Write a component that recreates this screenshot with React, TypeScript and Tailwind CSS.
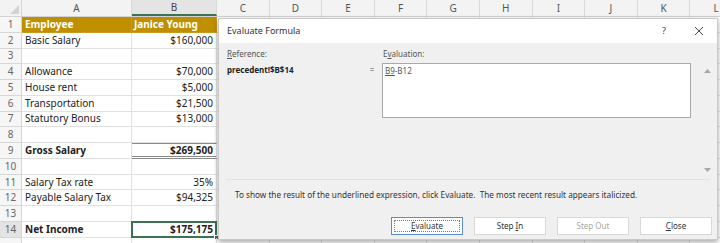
import React from 'react';

type R = { n: number; a?: string; b?: string; header?: boolean; bold?: boolean; gross?: boolean; sel?: boolean; hideNum?: boolean };

const rows: R[] = [
  { n: 1, a: 'Employee', b: 'Janice Young', header: true },
  { n: 2, a: 'Basic Salary', b: '$160,000' },
  { n: 3 },
  { n: 4, a: 'Allowance', b: '$70,000' },
  { n: 5, a: 'House rent', b: '$5,000' },
  { n: 6, a: 'Transportation', b: '$21,500' },
  { n: 7, a: 'Statutory Bonus', b: '$13,000' },
  { n: 8 },
  { n: 9, a: 'Gross Salary', b: '$269,500', bold: true, gross: true },
  { n: 10 },
  { n: 11, a: 'Salary Tax rate', b: '35%' },
  { n: 12, a: 'Payable Salary Tax', b: '$94,325' },
  { n: 13 },
  { n: 14, a: 'Net Income', b: '$175,175', bold: true, sel: true },
  { n: 15, hideNum: true },
];

const cols = ['C', 'D', 'E', 'F', 'G', 'H', 'I', 'J', 'K', 'L'];

function Row({ r }: { r: R }) {
  return (
    <div className="flex h-[15.77px] shrink-0">
      <div
        className={`w-[22px] shrink-0 flex items-center justify-center border-r border-b border-[#d6d6d6] text-[10px] text-[#666] ${
          r.sel ? 'bg-[#e3e3e3]' : 'bg-[#f6f6f6]'
        }`}
      >
        {r.hideNum ? '' : r.n}
      </div>
      <div
        className={`w-[110px] shrink-0 flex items-center pl-[3px] text-[10px] whitespace-nowrap border-r border-b ${
          r.header ? 'bg-[#bf8f00] text-white font-bold border-[#c99a1e]' : 'text-[#222] border-[#e1e1e1]'
        } ${r.bold ? 'font-bold' : ''}`}
      >
        {r.a}
      </div>
      <div
        className={`relative w-[85px] shrink-0 flex items-center text-[10px] whitespace-nowrap border-r ${
          r.header
            ? 'bg-[#bf8f00] text-white font-bold pl-[2px] border-b border-[#c99a1e]'
            : 'justify-end pr-[3px] text-[#222] border-[#e1e1e1]'
        } ${r.gross ? 'border-t border-t-[#8a8a8a] border-b-[3px] border-double border-b-[#8a8a8a]' : ''} ${
          !r.header && !r.gross ? 'border-b' : ''
        } ${r.bold ? 'font-bold' : ''}`}
      >
        {r.b}
        {r.sel && (
          <>
            <div className="absolute left-[-1px] top-[-1px] right-[-1px] bottom-[-1px] border-2 border-[#3b7350]" />
            <div className="absolute right-[-3px] bottom-[-3px] w-[5px] h-[5px] bg-[#3b7350] border border-white" />
          </>
        )}
      </div>
      {cols.map((c) => (
        <div key={c} className="w-[52.6px] shrink-0 border-r border-b border-[#e1e1e1]" />
      ))}
    </div>
  );
}

function Btn({ children, focused, disabled }: { children: React.ReactNode; focused?: boolean; disabled?: boolean }) {
  return (
    <div
      className={`w-[72px] h-[18px] flex items-center justify-center bg-white text-[8px] ${
        focused ? 'border border-[#5a8dd0] p-[2px]' : 'border border-[#d9d9d9]'
      } ${disabled ? 'text-[#a6a6a6]' : 'text-[#333]'}`}
    >
      {focused ? (
        <div className="w-full h-full border border-dotted border-[#777] flex items-center justify-center">{children}</div>
      ) : (
        children
      )}
    </div>
  );
}

export default function App() {
  return (
    <div className="relative w-[720px] h-[243px] overflow-hidden bg-white font-['Noto_Sans','Open_Sans',sans-serif]">
      {/* Sheet */}
      <div className="flex flex-col">
        <div className="flex h-[17px] shrink-0 bg-[#f3f3f3] border-b border-[#d2d2d2]">
          <div className="relative w-[22px] shrink-0 border-r border-[#d6d6d6]">
            <svg className="absolute right-[2px] bottom-[2px]" width="9" height="9" viewBox="0 0 9 9">
              <polygon points="9,0 9,9 0,9" fill="#d4d4d4" />
            </svg>
          </div>
          <div className="w-[110px] shrink-0 flex items-center justify-center text-[10px] text-[#555] border-r border-[#dadada]">A</div>
          <div className="w-[85px] shrink-0 flex items-center justify-center text-[10px] text-[#444] bg-[#e4e4e4] border-r border-[#dadada] border-b-2 border-b-[#3b7350]">
            B
          </div>
          {cols.map((c) => (
            <div key={c} className="w-[52.6px] shrink-0 flex items-center justify-center text-[10px] text-[#555] border-r border-[#dadada]">
              {c}
            </div>
          ))}
        </div>
        {rows.map((r) => (
          <Row key={r.n} r={r} />
        ))}
      </div>

      {/* Dialog */}
      <div className="absolute left-[218px] top-[18px] w-[500px] h-[222px] flex flex-col bg-[#f0f0f0] border border-[#c9c9c9] shadow-[0_2px_5px_rgba(0,0,0,0.35)]">
        <div className="h-[24px] shrink-0 bg-white flex items-center pl-[8px] pr-[13px]">
          <span className="text-[9px] text-[#333]">Evaluate Formula</span>
          <span className="ml-auto text-[9px] text-[#444]">?</span>
          <svg className="ml-[28px]" width="10" height="10" viewBox="0 0 10 10">
            <path d="M1 1 L9 9 M9 1 L1 9" stroke="#444" strokeWidth="1" fill="none" />
          </svg>
        </div>
        <div className="flex-1 flex flex-col">
          <div className="h-[136px] shrink-0 flex pl-[8px]">
            <div className="w-[137px] shrink-0 flex flex-col">
              <div className="mt-[4.5px] h-[11px] leading-[11px] text-[8px] text-[#555]">
                <span className="underline">R</span>eference:
              </div>
              <div className="mt-[5px] h-[11px] leading-[11px] text-[8px] font-bold text-[#222] whitespace-nowrap">precedent!$B$14</div>
            </div>
            <div className="w-[16px] shrink-0 pt-[21px] text-center text-[8px] leading-[11px] text-[#555]">=</div>
            <div className="ml-[2px] w-[309px] shrink-0 flex flex-col">
              <div className="mt-[4.5px] h-[11px] leading-[11px] text-[8px] text-[#555] pl-[1px]">
                E<span className="underline">v</span>aluation:
              </div>
              <div className="mt-[4.5px] h-[55px] bg-white border border-[#a9a9a9] pl-[2px] pt-[1px] text-[8px] leading-[11px] text-[#555]">
                <span className="underline">B9</span>-B12
              </div>
            </div>
            <div className="ml-[7px] mt-[20px] w-[19px] h-[114px] flex flex-col items-center justify-between pt-[6px] pb-[5px]">
              <svg width="7" height="4" viewBox="0 0 7 4">
                <polygon points="3.5,0 7,4 0,4" fill="#a8a8a8" />
              </svg>
              <svg width="7" height="4" viewBox="0 0 7 4">
                <polygon points="0,0 7,0 3.5,4" fill="#a8a8a8" />
              </svg>
            </div>
          </div>
          <div className="mx-[7px] h-px bg-[#e2e2e2]" />
          <div className="mt-[8.5px] pl-[16px] h-[11px] leading-[11px] text-[8.2px] text-[#333] whitespace-nowrap">
            To show the result of the underlined expression, click Evaluate.&nbsp; The most recent result appears italicized.
          </div>
          <div className="mt-[17.5px] flex justify-end gap-[11px] pr-[5px]">
            <Btn focused>
              <span>
                <span className="underline">E</span>valuate
              </span>
            </Btn>
            <Btn>
              <span>
                Step <span className="underline">I</span>n
              </span>
            </Btn>
            <Btn disabled>Step Out</Btn>
            <Btn>
              <span>
                <span className="underline">C</span>lose
              </span>
            </Btn>
          </div>
        </div>
      </div>
    </div>
  );
}
